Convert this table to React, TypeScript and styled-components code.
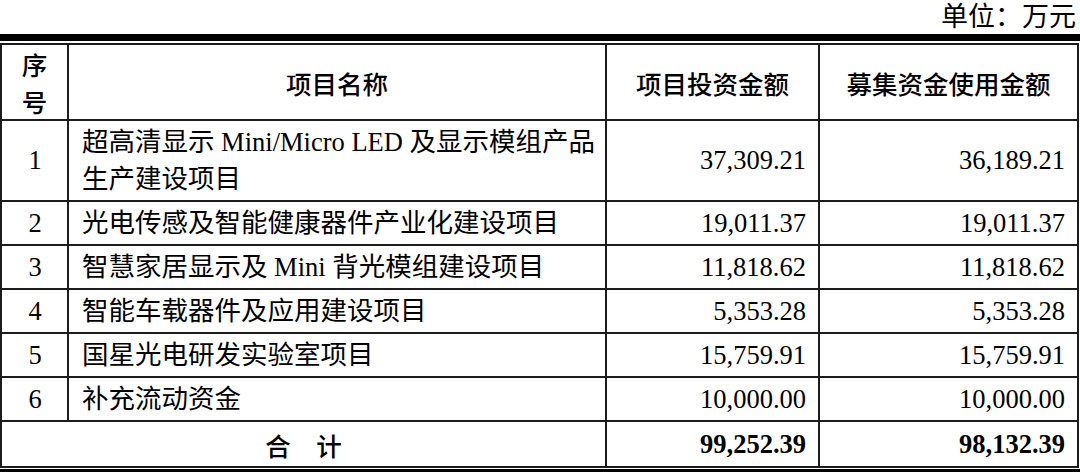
import React from "react";
import styled, { createGlobalStyle } from "styled-components";

const Global = createGlobalStyle`
  html, body { margin: 0; padding: 0; background: #fff; }
  body { width: 1080px; height: 472px; overflow: hidden; }
`;

const Page = styled.div`
  width: 1080px;
  font-family: "Liberation Serif", "Noto Sans CJK SC", serif;
  color: #000;
`;

const Unit = styled.div`
  height: 34px;
  display: flex;
  align-items: center;
  justify-content: flex-end;
  padding-right: 4px;
  box-sizing: border-box;
  font-size: 27px;
  line-height: 1;
`;

const Frame = styled.div`
  border-top: 7px solid #000;
  border-bottom: 9px solid #000;
  padding: 2px 0 1px;
`;

const Table = styled.table`
  width: 1079px;
  border-collapse: separate;
  border-spacing: 0;
  table-layout: fixed;
  border-top: 2px solid #1c1c1c;
  border-left: 2px solid #1c1c1c;
  font-size: 26.5px;
`;

const Row = styled.tr<{ $h: number }>`
  height: ${(p) => p.$h}px;
`;

const Cell = styled.td<{ $align?: "left" | "center" | "right"; $bold?: boolean }>`
  border-right: 2px solid #1c1c1c;
  border-bottom: 2px solid #1c1c1c;
  padding: 0 12px 0 13px;
  text-align: ${(p) => p.$align ?? "left"};
  font-weight: ${(p) => (p.$bold ? 700 : 400)};
  line-height: 37px;
  vertical-align: middle;
  white-space: nowrap;
`;

const HeadCell = styled.th`
  border-right: 2px solid #1c1c1c;
  border-bottom: 2px solid #1c1c1c;
  padding: 0;
  font-family: "Noto Sans CJK SC", sans-serif;
  font-weight: 500;
  font-size: 25.5px;
  line-height: 37px;
  text-align: center;
  vertical-align: middle;
`;

const TotalLabel = styled.td`
  border-right: 2px solid #1c1c1c;
  border-bottom: 2px solid #1c1c1c;
  text-align: center;
  font-family: "Noto Sans CJK SC", sans-serif;
  font-weight: 500;
  font-size: 25.5px;
  vertical-align: middle;
`;

const rows = [
  { no: "1", name: ["超高清显示 Mini/Micro LED 及显示模组产品", "生产建设项目"], a: "37,309.21", b: "36,189.21" },
  { no: "2", name: ["光电传感及智能健康器件产业化建设项目"], a: "19,011.37", b: "19,011.37" },
  { no: "3", name: ["智慧家居显示及 Mini 背光模组建设项目"], a: "11,818.62", b: "11,818.62" },
  { no: "4", name: ["智能车载器件及应用建设项目"], a: "5,353.28", b: "5,353.28" },
  { no: "5", name: ["国星光电研发实验室项目"], a: "15,759.91", b: "15,759.91" },
  { no: "6", name: ["补充流动资金"], a: "10,000.00", b: "10,000.00" },
];

export default function App() {
  return (
    <Page>
      <Global />
      <Unit>单位：万元</Unit>
      <Frame>
        <Table>
          <colgroup>
            <col style={{ width: 67 }} />
            <col style={{ width: 538 }} />
            <col style={{ width: 213 }} />
            <col style={{ width: 259 }} />
          </colgroup>
          <thead>
            <Row $h={72}>
              <HeadCell>
                序<br />号
              </HeadCell>
              <HeadCell>项目名称</HeadCell>
              <HeadCell>项目投资金额</HeadCell>
              <HeadCell>募集资金使用金额</HeadCell>
            </Row>
          </thead>
          <tbody>
            {rows.map((r) => (
              <Row key={r.no} $h={r.name.length > 1 ? 81 : 44}>
                <Cell $align="center">{r.no}</Cell>
                <Cell>
                  {r.name.map((n, i) => (
                    <React.Fragment key={i}>
                      {i > 0 && <br />}
                      {n}
                    </React.Fragment>
                  ))}
                </Cell>
                <Cell $align="right">{r.a}</Cell>
                <Cell $align="right">{r.b}</Cell>
              </Row>
            ))}
            <Row $h={46}>
              <TotalLabel colSpan={2}>合　计</TotalLabel>
              <Cell $align="right" $bold>99,252.39</Cell>
              <Cell $align="right" $bold>98,132.39</Cell>
            </Row>
          </tbody>
        </Table>
      </Frame>
    </Page>
  );
}
